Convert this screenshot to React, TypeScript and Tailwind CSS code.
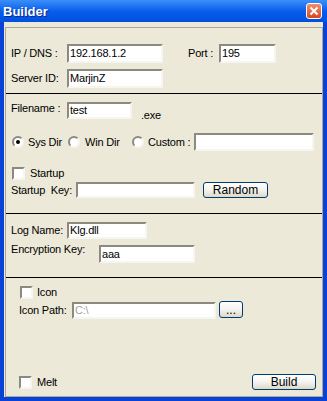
import type React from "react"

const font = "font-['Liberation_Sans',Arial,sans-serif] text-[11px] leading-none text-black tracking-[-0.2px]"

function TextBox({ value, w, h, disabled }: { value?: string; w: string; h: string; disabled?: boolean }): React.JSX.Element {
  return (
    <div
      className={`${w} ${h} shrink-0 border-2 border-t-[#8c8a7f] border-l-[#8c8a7f] border-b-[#f6f5f0] border-r-[#f6f5f0] bg-white flex items-center pl-[1px] ${
        disabled ? "text-[#a6a392]" : "text-black"
      }`}
    >
      <span className="text-[11px] leading-none">{value}</span>
    </div>
  )
}

function CheckBox(): React.JSX.Element {
  return (
    <div className="w-[13px] h-[13px] shrink-0 border-2 border-t-[#8c8a7f] border-l-[#8c8a7f] border-b-[#f6f5f0] border-r-[#f6f5f0] bg-white" />
  )
}

function Radio({ checked }: { checked?: boolean }): React.JSX.Element {
  return (
    <div className="w-[12px] h-[12px] shrink-0 rounded-full border-2 border-t-[#8c8a7f] border-l-[#8c8a7f] border-b-[#f6f5f0] border-r-[#f6f5f0] bg-white flex items-center justify-center">
      {checked && <div className="w-[4px] h-[4px] rounded-full bg-black" />}
    </div>
  )
}

function XPButton({ label, w, h }: { label: string; w: string; h: string }): React.JSX.Element {
  return (
    <div
      className={`${w} ${h} shrink-0 rounded-[3px] border border-[#003c74] bg-gradient-to-b from-white via-[#f4f3ee] to-[#dcd9c8] flex items-center justify-center text-[12px] leading-none tracking-normal`}
    >
      {label}
    </div>
  )
}

export default function App(): React.JSX.Element {
  return (
    <div className={`w-[327px] h-[401px] flex flex-col bg-[#0842d6] ${font}`}>
      {/* title bar */}
      <div className="h-[22px] shrink-0 flex items-center justify-between bg-gradient-to-b from-[#3a8ff8] via-[#0a5ded] to-[#0050dd] pl-[3px] pr-[5px]">
        <span className="font-['Liberation_Sans',Arial,sans-serif] font-bold text-[13px] text-white tracking-normal [text-shadow:1px_1px_0_#0a2a8a]">
          Builder
        </span>
        <div className="w-[16px] h-[16px] rounded-[3px] border border-white bg-gradient-to-b from-[#ef8f6f] to-[#d6461d] flex items-center justify-center">
          <svg width="10" height="10" viewBox="0 0 10 10">
            <path d="M1.5 1.5 L8.5 8.5 M8.5 1.5 L1.5 8.5" stroke="white" strokeWidth="2" />
          </svg>
        </div>
      </div>

      {/* client area */}
      <div className="flex-1 mx-[4px] mb-[4px] bg-[#ece9d8] pt-[5px] pl-[1px] flex">
        <div className="flex-1 border border-[#aca899] flex flex-col">
          {/* section 1 */}
          <div className="h-[65px] pl-[5px] pt-[16px] flex flex-col gap-[6px]">
            <div className="flex items-center h-[19px]">
              <span className="w-[56px]">IP / DNS :</span>
              <TextBox value="192.168.1.2" w="w-[96px]" h="h-[19px]" />
              <span className="ml-[25px] w-[31px]">Port :</span>
              <TextBox value="195" w="w-[57px]" h="h-[19px]" />
            </div>
            <div className="flex items-center h-[19px]">
              <span className="w-[56px]">Server ID:</span>
              <TextBox value="MarjinZ" w="w-[96px]" h="h-[19px]" />
            </div>
          </div>
          <div className="h-px bg-black" />

          {/* section 2 */}
          <div className="h-[119px] pl-[5px] pt-[8px] flex flex-col">
            <div className="flex items-start h-[17px]">
              <span className="w-[56px] pt-[1px]">Filename :</span>
              <TextBox value="test" w="w-[65px]" h="h-[17px]" />
              <span className="ml-[9px] mt-[8px]">.exe</span>
            </div>
            <div className="flex items-center h-[18px] mt-[14px] pl-[1px]">
              <Radio checked />
              <span className="ml-[4px] w-[40px]">Sys Dir</span>
              <Radio />
              <span className="ml-[5px] w-[47px]">Win Dir</span>
              <Radio />
              <span className="ml-[4px] w-[46px] whitespace-nowrap">Custom :</span>
              <TextBox w="w-[120px]" h="h-[18px]" />
            </div>
            <div className="flex items-center h-[13px] mt-[16px] pl-[1px]">
              <CheckBox />
              <span className="ml-[5px]">Startup</span>
            </div>
            <div className="flex items-center h-[16px] mt-[2px]">
              <span className="w-[65px] whitespace-pre">Startup  Key:</span>
              <TextBox w="w-[119px]" h="h-[16px]" />
              <div className="ml-[8px] -mt-[1px]">
                <XPButton label="Random" w="w-[65px]" h="h-[16px]" />
              </div>
            </div>
          </div>
          <div className="h-px bg-black" />

          {/* section 3 */}
          <div className="h-[63px] pl-[5px] pt-[8px] flex flex-col">
            <div className="flex items-center h-[17px]">
              <span className="w-[56px]">Log Name:</span>
              <TextBox value="Klg.dll" w="w-[80px]" h="h-[17px]" />
            </div>
            <div className="flex items-start h-[18px] mt-[6px]">
              <span className="w-[88px] -mt-[1px]">Encryption Key:</span>
              <TextBox value="aaa" w="w-[96px]" h="h-[18px]" />
            </div>
          </div>
          <div className="h-px bg-black" />

          {/* section 4 */}
          <div className="flex-1 pt-[8px] pb-[6px] pr-[6px] flex flex-col">
            <div className="flex items-center h-[13px] pl-[14px]">
              <CheckBox />
              <span className="ml-[4px]">Icon</span>
            </div>
            <div className="flex items-start h-[17px] mt-[3px] pl-[13px]">
              <span className="w-[53px] pt-[3px]">Icon Path:</span>
              <TextBox value="C:\" w="w-[144px]" h="h-[17px]" disabled />
              <div className="ml-[3px] -mt-[1px]">
                <XPButton label="..." w="w-[24px]" h="h-[17px]" />
              </div>
            </div>
            <div className="flex-1" />
            <div className="flex items-end justify-between pl-[13px]">
              <div className="flex items-center h-[13px] mb-[1px]">
                <CheckBox />
                <span className="ml-[5px]">Melt</span>
              </div>
              <XPButton label="Build" w="w-[64px]" h="h-[16px]" />
            </div>
          </div>
        </div>
      </div>
    </div>
  )
}
